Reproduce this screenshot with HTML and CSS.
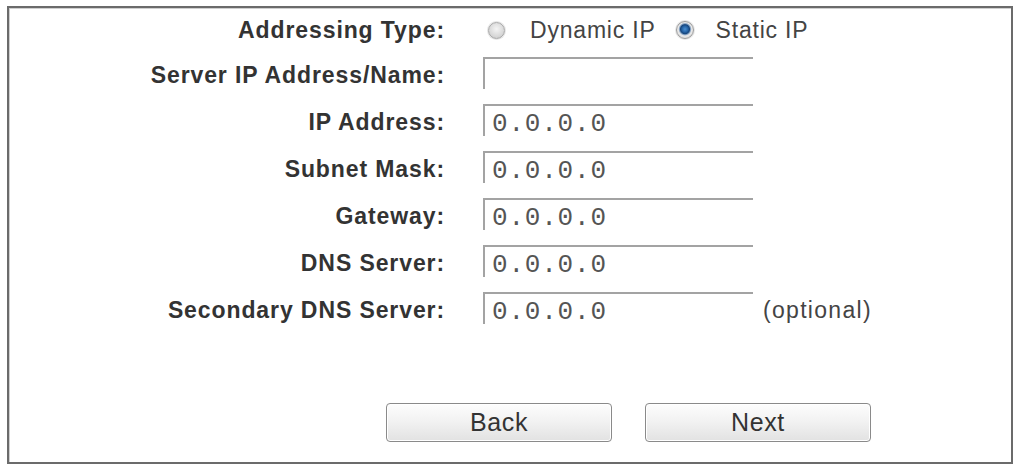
FILE: index.html
```html
<!DOCTYPE html>
<html lang="en">
<head>
    <meta charset="UTF-8">
    <meta name="viewport" content="width=device-width, initial-scale=1.0">
    <title>Quick Setup - WAN Connection</title>
    <link rel="stylesheet" href="styles.css">
</head>
<body>
    <div class="panel">
        <form class="wan-form">
            <div class="row row-type">
                <span class="label">Addressing Type:</span>
                <div class="radios">
                    <label class="radio"><input type="radio" name="type" value="dynamic">Dynamic IP</label>
                    <label class="radio"><input type="radio" name="type" value="static" checked>Static IP</label>
                </div>
            </div>
            <div class="row">
                <span class="label">Server IP Address/Name:</span>
                <input class="field" type="text" value="">
            </div>
            <div class="row">
                <span class="label">IP Address:</span>
                <input class="field" type="text" value="0.0.0.0">
            </div>
            <div class="row">
                <span class="label">Subnet Mask:</span>
                <input class="field" type="text" value="0.0.0.0">
            </div>
            <div class="row">
                <span class="label">Gateway:</span>
                <input class="field" type="text" value="0.0.0.0">
            </div>
            <div class="row">
                <span class="label">DNS Server:</span>
                <input class="field" type="text" value="0.0.0.0">
            </div>
            <div class="row">
                <span class="label">Secondary DNS Server:</span>
                <input class="field" type="text" value="0.0.0.0">
                <span class="hint">(optional)</span>
            </div>

            <div class="actions">
                <button type="button" class="btn">Back</button>
                <button type="button" class="btn">Next</button>
            </div>
        </form>
    </div>
</body>
</html>
```

FILE: styles.css
```css
* {
    box-sizing: border-box;
}

body {
    margin: 0;
    background: #fff;
    font-family: "Liberation Sans", Arial, sans-serif;
    color: #333;
}

.panel {
    height: 458px;
    margin: 6px 2px 1px 7px;
    border: 2px solid #6b6b6b;
    box-shadow: inset 1px 1px 0 #cfcfcf;
    background: #fff;
}

.wan-form {
    margin: 0;
}

.row {
    display: flex;
    align-items: flex-start;
    height: 47px;
}

.row .label {
    padding-top: 7px;
}

.row-type {
    padding-top: 9px;
}

.row-type .label {
    padding-top: 0;
}

.label {
    width: 436px;
    margin-right: 38px;
    text-align: right;
    font-size: 23px;
    line-height: 26px;
    font-weight: bold;
    letter-spacing: 0.9px;
    color: #333;
}

.radios {
    display: flex;
    align-items: center;
    gap: 20px;
    margin-left: 5px;
    height: 26px;
}

.radio {
    display: flex;
    align-items: center;
    font-size: 23px;
    letter-spacing: 0.8px;
    color: #444;
    white-space: nowrap;
}

.radio input {
    appearance: none;
    flex-shrink: 0;
    width: 17px;
    height: 17px;
    margin: 0 25px 0 0;
    border: 1px solid #a8a8a8;
    border-radius: 50%;
    background: radial-gradient(circle at 50% 40%, #f4f4f4 0, #d9d9d9 60%, #c4c4c4 100%);
    box-shadow: 0 0 0 1px #e6e6e6;
}

.radio input:checked {
    width: 18px;
    height: 18px;
    margin-right: 22px;
    border-color: #9c9c9c;
    background: radial-gradient(circle at 50% 45%, #4a90d0 0, #2563a6 25%, #17467c 38%, #7f9dbf 46%, #e9e9e9 56%, #cfcfcf 100%);
}

.field {
    width: 270px;
    height: 32px;
    margin: 2px 0 0 0;
    padding: 5px 0 0 7px;
    border: none;
    border-top: 2px solid #a3a3a3;
    border-left: 2px solid #a3a3a3;
    font-family: "Liberation Mono", "Courier New", monospace;
    font-size: 26px;
    letter-spacing: 0.8px;
    color: #555;
    background: #fff;
    outline: none;
}

.hint {
    margin: 7px 0 0 10px;
    font-size: 23px;
    line-height: 26px;
    letter-spacing: 1.3px;
    color: #444;
}

.actions {
    display: flex;
    gap: 33px;
    padding: 66px 0 0 377px;
}

.btn {
    width: 226px;
    height: 39px;
    border: 1px solid #8a8a8a;
    border-radius: 4px;
    background: linear-gradient(#fdfdfd, #f1f1f1 50%, #e2e2e2);
    box-shadow: inset 0 0 0 1px #fff;
    font-family: "Liberation Sans", Arial, sans-serif;
    font-size: 25px;
    letter-spacing: 0.6px;
    color: #333;
    cursor: pointer;
}
```
